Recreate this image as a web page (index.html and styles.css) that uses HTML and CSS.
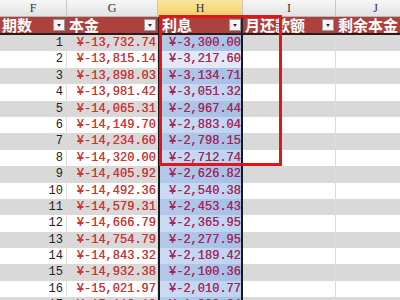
FILE: index.html
```html
<!DOCTYPE html>
<html>
<head>
<meta charset="utf-8">
<link rel="stylesheet" href="styles.css">
</head>
<body>
<div class="sheet">
  <div class="grid">
    <div class="colhead">F</div>
    <div class="colhead">G</div>
    <div class="colhead sel">H</div>
    <div class="colhead">I</div>
    <div class="colhead last">J</div>

    <div class="th"><span>期数</span><i class="dd"></i></div>
    <div class="th"><span>本金</span><i class="dd"></i></div>
    <div class="th hcol"><span>利息</span><i class="dd"></i></div>
    <div class="th"><span>月还款额</span><i class="dd"></i></div>
    <div class="th last"><span>剩余本金</span></div>
  </div>
  <div class="body" id="body"></div>
  <div class="mark"></div>
</div>
<script src="app.js"></script>
</body>
</html>
```
FILE: app.js
```js
var g = ["13,732.74","13,815.14","13,898.03","13,981.42","14,065.31","14,149.70","14,234.60","14,320.00","14,405.92","14,492.36","14,579.31","14,666.79","14,754.79","14,843.32","14,932.38","15,021.97","15,112.10"];
var h = ["3,300.00","3,217.60","3,134.71","3,051.32","2,967.44","2,883.04","2,798.15","2,712.74","2,626.82","2,540.38","2,453.43","2,365.95","2,277.95","2,189.42","2,100.36","2,010.77","1,920.64"];
var body = document.getElementById("body");
var html = "";
for (var i = 0; i < g.length; i++) {
  var cls = "row " + (i % 2 === 0 ? "odd" : "even") + (i === 1 ? " active" : "");
  html += '<div class="' + cls + '">' +
    '<div class="c n">' + (i + 1) + '</div>' +
    '<div class="c m">\u00a5-' + g[i] + '</div>' +
    '<div class="c m hcol">\u00a5-' + h[i] + '</div>' +
    '<div class="c"></div>' +
    '<div class="c last"></div>' +
    '</div>';
}
body.innerHTML = html;
```
FILE: styles.css
```css
html, body {
  margin: 0;
  padding: 0;
  background: #fff;
  overflow: hidden;
}
.sheet {
  position: relative;
  width: 400px;
  height: 300px;
  overflow: hidden;
}
.grid, .row {
  display: grid;
  grid-template-columns: 67px 91px 85px 93px 80px;
}
.grid {
  grid-template-rows: 17px 18px;
}
.colhead {
  font-family: "Liberation Serif", serif;
  font-size: 12px;
  color: #333;
  text-align: center;
  line-height: 17px;
  background: linear-gradient(#f7f7f7, #e2e2e2);
  border-right: 1px solid #c6c6c6;
  border-bottom: 1px solid #b8b8b8;
  box-sizing: border-box;
}
.colhead.sel {
  background: linear-gradient(#fbe6a0, #f4d067);
  border-bottom-color: #e0b040;
}
.th {
  display: flex;
  align-items: center;
  justify-content: space-between;
  background: #ad413d;
  color: #fff;
  font-family: "Noto Sans CJK SC", sans-serif;
  font-weight: bold;
  font-size: 15px;
  line-height: 16px;
  padding: 0 2px 0 2px;
  border-bottom: 2px solid #2a1a1a;
  box-sizing: border-box;
}
.th.hcol {
  border-left: 2px solid #222;
  border-right: 2px solid #222;
  padding-right: 0;
}
.dd {
  width: 12px;
  height: 12px;
  background: #f5f5f5;
  border: 1px solid #9a9a9a;
  box-sizing: border-box;
  position: relative;
  flex: none;
}
.dd::after {
  content: "";
  position: absolute;
  left: 3px;
  top: 4px;
  border-left: 2.5px solid transparent;
  border-right: 2.5px solid transparent;
  border-top: 3px solid #333;
}
.row {
  height: 16.4px;
}
.row.odd { background: #d9d9d9; }
.row.even { background: #fff; }
.c {
  border-right: 1px solid #dcdcdc;
  box-sizing: border-box;
  font-family: "Liberation Mono", monospace;
  font-size: 12px;
  line-height: 16.4px;
  text-align: right;
  white-space: nowrap;
  overflow: hidden;
}
.c.n {
  color: #222;
  padding-right: 3px;
}
.c.m {
  color: #cc3535;
  padding-right: 1px;
  text-shadow: 0 0 0.4px currentColor;
}
.c.hcol {
  color: #a3285a;
  border-left: 2px solid #1a1a1a;
  border-right: 2px solid #1a1a1a;
  padding-right: 0;
}
.row.odd .hcol { background: linear-gradient(90deg, #b2c9ea, #a6bfe5); }
.row.even .hcol { background: linear-gradient(90deg, #cadcf4, #bcd3f1); }
.row.active .hcol { background: #e2e8f5; }
.c.last { border-right: none; }
.mark {
  position: absolute;
  left: 159px;
  top: 15px;
  width: 123px;
  height: 151px;
  border: 3px solid #e0161d;
  box-sizing: border-box;
}
```
